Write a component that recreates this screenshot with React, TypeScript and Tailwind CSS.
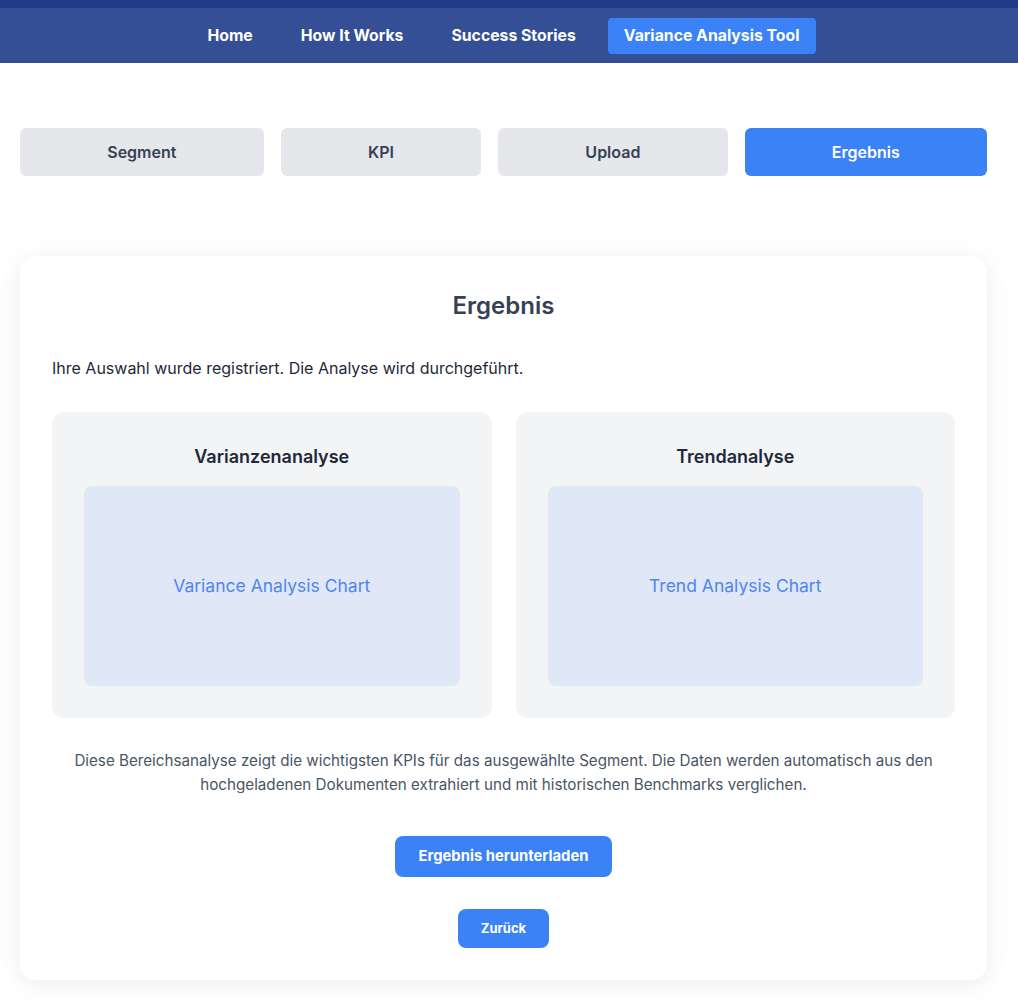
const tabs = ['Segment', 'KPI', 'Upload', 'Ergebnis']
const navLinks = ['Home', 'How It Works', 'Success Stories', 'Variance Analysis Tool']

const ChartCard = ({ title, label }: { title: string; label: string }) => (
    <div className="bg-gray-100 rounded-xl px-8 pt-[31px] pb-8 flex flex-col">
        <h3 className="text-center text-[18px] font-semibold text-gray-800 mb-4">
            {title}
        </h3>
        <div className="h-[200px] rounded-lg bg-[#e0e7f6] flex items-center justify-center text-[17.5px] text-[#4f86f0]">
            {label}
        </div>
    </div>
)

export default function App() {
    const active = 'Ergebnis'
    return (
        <div className="min-h-screen bg-white font-['Inter',sans-serif] text-gray-700">
            <div className="h-2 bg-[#1f3a8a]" />
            <nav className="h-[55px] bg-[#354f96] flex items-center justify-center gap-4 pr-[11px] pt-px">
                {navLinks.map((link) => (
                    <a
                        key={link}
                        className={
                            link === 'Variance Analysis Tool'
                                ? 'px-4 h-9 flex items-center rounded bg-[#3b82f6] text-white font-bold text-[15.8px]'
                                : 'px-4 h-9 flex items-center text-white font-bold text-[15.8px]'
                        }
                    >
                        {link}
                    </a>
                ))}
            </nav>

            <div className="pl-5 pr-[31px] pt-[65px] flex gap-[17px]">
                {tabs.map((tab) => (
                    <button
                        key={tab}
                        className={
                            tab === active
                                ? 'flex-auto h-12 rounded-md bg-[#3b82f6] text-white font-semibold text-[16px]'
                                : 'flex-auto h-12 rounded-md bg-gray-200 text-gray-700 font-semibold text-[16px]'
                        }
                    >
                        {tab}
                    </button>
                ))}
            </div>

            <div className="pl-5 pr-[31px] pt-20 pb-5">
                <section className="bg-white rounded-2xl shadow-[0_4px_24px_rgba(0,0,0,0.08)] px-8 pt-[34px] pb-8">
                    <h2 className="text-center text-2xl font-semibold text-gray-700">
                        Ergebnis
                    </h2>
                    <p className="mt-[34px] text-[16px] text-gray-800">
                        Ihre Auswahl wurde registriert. Die Analyse wird durchgeführt.
                    </p>
                    <div className="mt-8 grid grid-cols-2 gap-6">
                        <ChartCard title="Varianzenanalyse" label="Variance Analysis Chart" />
                        <ChartCard title="Trendanalyse" label="Trend Analysis Chart" />
                    </div>
                    <p className="mt-[31px] text-center text-[15.2px] leading-6 text-gray-600 px-1">
                        Diese Bereichsanalyse zeigt die wichtigsten KPIs für das ausgewählte
                        Segment. Die Daten werden automatisch aus den hochgeladenen Dokumenten
                        extrahiert und mit historischen Benchmarks verglichen.
                    </p>
                    <div className="mt-[39px] flex flex-col items-center gap-8">
                        <button className="h-[41px] px-6 rounded-lg bg-[#3b82f6] text-white font-bold text-[14.8px]">
                            Ergebnis herunterladen
                        </button>
                        <button className="h-[39px] px-[23px] rounded-lg bg-[#3b82f6] text-white font-bold text-[13px]">
                            Zurück
                        </button>
                    </div>
                </section>
            </div>
        </div>
    )
}
